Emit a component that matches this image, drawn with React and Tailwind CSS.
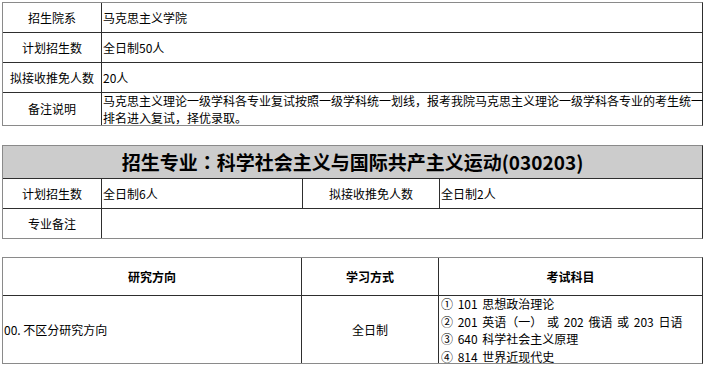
const font = { fontFamily: '"Noto Sans CJK SC", "Noto Sans", sans-serif' };

function InfoRow({ label, children, tall }) {
  return (
    <div className={`flex ${tall ? "h-[32px]" : "h-[30px] border-b border-[#2e2e2e]"}`}>
      <div className="w-[99px] shrink-0 flex items-center justify-center border-r border-[#2e2e2e]">{label}</div>
      <div className="flex-1 flex items-center pl-[1px] leading-[17px] overflow-visible">{children}</div>
    </div>
  );
}

export default function App() {
  return (
    <div className="w-[705px] h-[366px] bg-white pt-[2px] text-[12px] text-black overflow-hidden font-['Noto_Sans_CJK_SC',sans-serif]">
      {/* 院系信息 */}
      <div className="ml-[2px] w-[701px] border border-[#8a8a8a] border-r-[#2e2e2e]">
        <InfoRow label="招生院系">马克思主义学院</InfoRow>
        <InfoRow label="计划招生数">全日制50人</InfoRow>
        <InfoRow label="拟接收推免人数">20人</InfoRow>
        <InfoRow label="备注说明" tall>
          <span className="block">
            <span className="whitespace-nowrap">马克思主义理论一级学科各专业复试按照一级学科统一划线，报考我院马克思主义理论一级学科各专业的考生统一</span>
            <br />
            排名进入复试，择优录取。
          </span>
        </InfoRow>
      </div>

      {/* 招生专业 */}
      <div className="ml-[2px] mt-[19px] w-[701px] border border-[#8a8a8a] border-r-[#2e2e2e]">
        <div className="h-[33px] bg-[#cccccc] flex items-center justify-center border-b border-[#2e2e2e] text-[19px] font-bold text-black" style={font}>
          招生专业<span className="font-['Noto_Sans_CJK_TC',sans-serif]">：</span>科学社会主义与国际共产主义运动(030203)
        </div>
        <div className="flex h-[30px] border-b border-[#2e2e2e]">
          <div className="w-[99px] shrink-0 flex items-center justify-center border-r border-[#2e2e2e]">计划招生数</div>
          <div className="w-[201px] shrink-0 flex items-center pl-[1px] border-r border-[#2e2e2e]">全日制6人</div>
          <div className="w-[137px] shrink-0 flex items-center justify-center border-r border-[#2e2e2e]">拟接收推免人数</div>
          <div className="flex-1 flex items-center pl-[1px]">全日制2人</div>
        </div>
        <div className="flex h-[29px]">
          <div className="w-[99px] shrink-0 flex items-center justify-center border-r border-[#2e2e2e]">专业备注</div>
          <div className="flex-1"></div>
        </div>
      </div>

      {/* 研究方向 */}
      <div className="ml-[2px] mt-[18px] w-[701px] border border-[#8a8a8a] border-r-[#2e2e2e]">
        <div className="flex h-[38px] border-b border-[#2e2e2e] font-bold">
          <div className="w-[299px] shrink-0 flex items-center justify-center border-r border-[#2e2e2e]">研究方向</div>
          <div className="w-[137px] shrink-0 flex items-center justify-center border-r border-[#2e2e2e]">学习方式</div>
          <div className="flex-1 flex items-center justify-center">考试科目</div>
        </div>
        <div className="flex h-[67px]">
          <div className="w-[299px] shrink-0 flex items-center pl-[1px] border-r border-[#2e2e2e]">00. 不区分研究方向</div>
          <div className="w-[137px] shrink-0 flex items-center justify-center border-r border-[#2e2e2e]">全日制</div>
          <div className="flex-1 flex flex-col justify-center pl-[2px] leading-[17.5px] pt-[1px] [word-spacing:2px]">
            <span>① 101 思想政治理论</span>
            <span>② 201 英语（一） 或 202 俄语 或 203 日语</span>
            <span>③ 640 科学社会主义原理</span>
            <span>④ 814 世界近现代史</span>
          </div>
        </div>
      </div>
    </div>
  );
}
